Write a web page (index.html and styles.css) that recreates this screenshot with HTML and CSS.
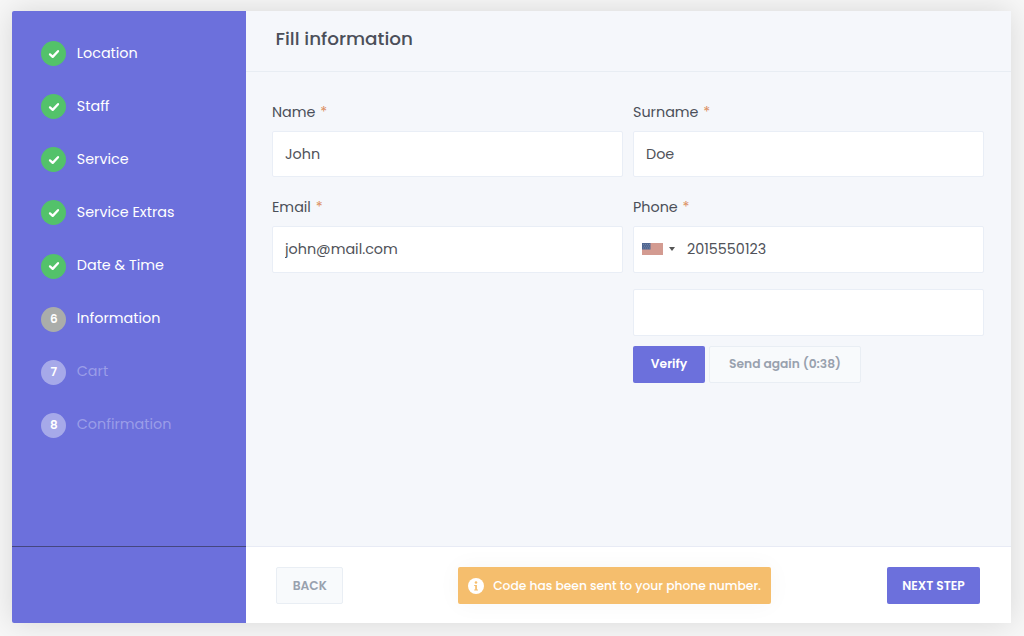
FILE: index.html
```html
<!DOCTYPE html>
<html lang="en">

<head>
  <meta charset="UTF-8">
  <meta name="viewport" content="width=device-width, initial-scale=1.0">
  <title>Fill information</title>
  <link rel="stylesheet" href="styles.css">
</head>

<body>
  <div class="booking">
    <aside class="sidebar">
      <ul class="steps">
        <li class="step done"><span class="badge"><svg viewBox="0 0 12 10"><path d="M2 5.4 4.7 7.9 10 2.2"/></svg></span><span class="title">Location</span></li>
        <li class="step done"><span class="badge"><svg viewBox="0 0 12 10"><path d="M2 5.4 4.7 7.9 10 2.2"/></svg></span><span class="title">Staff</span></li>
        <li class="step done"><span class="badge"><svg viewBox="0 0 12 10"><path d="M2 5.4 4.7 7.9 10 2.2"/></svg></span><span class="title">Service</span></li>
        <li class="step done"><span class="badge"><svg viewBox="0 0 12 10"><path d="M2 5.4 4.7 7.9 10 2.2"/></svg></span><span class="title">Service Extras</span></li>
        <li class="step done"><span class="badge"><svg viewBox="0 0 12 10"><path d="M2 5.4 4.7 7.9 10 2.2"/></svg></span><span class="title">Date &amp; Time</span></li>
        <li class="step active"><span class="badge">6</span><span class="title">Information</span></li>
        <li class="step"><span class="badge">7</span><span class="title">Cart</span></li>
        <li class="step"><span class="badge">8</span><span class="title">Confirmation</span></li>
      </ul>
      <div class="sidebar-footer"></div>
    </aside>

    <main class="panel">
      <header class="panel-header">
        <h1>Fill information</h1>
      </header>

      <form class="form">
        <div class="field">
          <label for="name">Name <i>*</i></label>
          <input id="name" type="text" value="John">
        </div>
        <div class="field">
          <label for="surname">Surname <i>*</i></label>
          <input id="surname" type="text" value="Doe">
        </div>
        <div class="field">
          <label for="email">Email <i>*</i></label>
          <input id="email" type="text" value="john@mail.com">
        </div>
        <div class="field">
          <label for="phone">Phone <i>*</i></label>
          <div class="phone">
            <svg class="flag" viewBox="0 0 21 12">
              <rect width="21" height="12" fill="#d39b91"/>
              <rect width="8.5" height="6.5" fill="#516792"/>
              <path d="M1 1.5h7M2 3.2h6M1 5h7" stroke="#8290ae" stroke-width=".7" stroke-dasharray="1 1"/>
            </svg>
            <span class="caret"></span>
            <input id="phone" type="text" value="2015550123">
          </div>
          <input class="code" type="text" aria-label="Code">
          <div class="verify">
            <button type="button" class="btn btn-primary">Verify</button>
            <button type="button" class="btn btn-light btn-send">Send again (0:38)</button>
          </div>
        </div>
      </form>

      <footer class="panel-footer">
        <button type="button" class="btn btn-light btn-back">BACK</button>
        <div class="notice">
          <svg viewBox="0 0 16 16">
            <circle cx="8" cy="8" r="8" fill="#fff"/>
            <circle cx="8" cy="4.5" r="1.3" fill="#f5be6d"/>
            <path d="M6.2 7h2.7v4.5H10v1H6.2v-1h1V8h-1z" fill="#f5be6d"/>
          </svg>
          <span>Code has been sent to your phone number.</span>
        </div>
        <button type="button" class="btn btn-primary btn-next">NEXT STEP</button>
      </footer>
    </main>
  </div>
</body>

</html>
```
FILE: styles.css
```css
* {
  box-sizing: border-box;
}
body {
  margin: 0;
  height: 636px;
  padding: 10.5px 13px 13px 11.5px;
  overflow: hidden;
  background: #f7f7f7;
  color: #4b4f59;
  font-family: Poppins, Inter, sans-serif;
  font-size: 14.35px;
}
.booking {
  display: flex;
  height: 612.5px;
  border-radius: 2px;
  box-shadow: 0 0 30px rgba(0, 0, 0, .13);
}

/* Steps */
.sidebar {
  display: flex;
  flex-direction: column;
  width: 234px;
  background: #6c70dc;
  border-radius: 2px 0 0 2px;
}
.steps {
  flex: 1;
  margin: 0;
  padding: 30.7px 0 0 29.8px;
  list-style: none;
}
.step {
  display: flex;
  align-items: center;
  gap: 10.5px;
  height: 25px;
  margin-bottom: 28.1px;
  color: #9a9de8;
}
.step.done, .step.active {
  color: #fff;
}
.title {
  padding-bottom: 1px;
}
.badge {
  display: flex;
  align-items: center;
  justify-content: center;
  width: 25px;
  height: 25px;
  border-radius: 50%;
  background: #a6a9e9;
  color: #fff;
  font-size: 12px;
  font-weight: 600;
}
.badge svg {
  width: 12px;
  height: 10px;
  fill: none;
  stroke: #fff;
  stroke-width: 2.3;
  stroke-linecap: round;
  stroke-linejoin: round;
}
.done .badge {
  background: #53c26a;
}
.active .badge {
  background: #aaadaa;
}
.sidebar-footer {
  height: 77px;
  border-top: 1px solid #45477f;
}

/* Panel */
.panel {
  display: flex;
  flex-direction: column;
  flex: 1;
  background: #f5f7fb;
}
.panel-header {
  display: flex;
  align-items: center;
  height: 61px;
  padding: 0 30px 4px;
  border-bottom: 1px solid #e8edf3;
}
h1 {
  margin: 0;
  font-size: 18.4px;
  font-weight: 500;
}
.form {
  display: grid;
  grid-template-columns: 351px 351px;
  align-content: start;
  gap: 18px 10px;
  flex: 1;
  padding: 28px 0 0 26.5px;
}
label {
  display: block;
  height: 31px;
  line-height: 24px;
}
label i {
  margin-left: 1px;
  color: #dc8f62;
  font-style: normal;
}
input {
  display: block;
  width: 100%;
  height: 46.5px;
  padding: 1px 12px 0;
  border: 1px solid #e9eef6;
  border-radius: 2px;
  background: #fff;
  color: #505259;
  font: inherit;
}
.phone {
  display: flex;
  align-items: center;
  height: 46.5px;
  padding-left: 8px;
  border: 1px solid #e9eef6;
  border-radius: 2px;
  background: #fff;
}
.phone input {
  flex: 1;
  height: 44px;
  padding-top: 0;
  border: 0;
}
.flag {
  width: 21px;
  height: 12px;
}
.caret {
  margin-left: 6px;
  border: 3px solid transparent;
  border-top: 4px solid #555;
  border-bottom: 0;
}
.code {
  margin-top: 16.5px;
}
.verify {
  display: flex;
  gap: 4px;
  margin-top: 10.5px;
}
.btn {
  height: 37px;
  padding: 0 0 1px;
  border: 1px solid transparent;
  border-radius: 2px;
  font-family: inherit;
  font-size: 12.25px;
  font-weight: 600;
}
.btn-primary {
  width: 72px;
  background: #6c70dc;
  color: #fff;
}
.btn-light {
  border-color: #e9eef4;
  background: #f8fafc;
  color: #98a1ae;
}
.btn-send {
  width: 152px;
}

/* Footer */
.panel-footer {
  display: flex;
  align-items: center;
  justify-content: space-between;
  height: 77px;
  padding: 1px 31px 0 30.8px;
  border-top: 1px solid #e8ebf5;
  background: #fff;
}
.panel-footer .btn {
  padding: 0;
}
.btn-back {
  width: 67px;
}
.btn-next {
  width: 93px;
}
.notice {
  display: flex;
  align-items: center;
  gap: 9px;
  width: 313px;
  height: 37px;
  margin-right: 1px;
  padding-left: 10px;
  border-radius: 2px;
  background: #f5be6d;
  box-shadow: 0 0 25px rgba(0, 0, 0, .04);
  color: #fff;
  font-size: 12.25px;
  font-weight: 500;
  white-space: nowrap;
}
.notice svg {
  width: 16px;
  height: 16px;
}
```
